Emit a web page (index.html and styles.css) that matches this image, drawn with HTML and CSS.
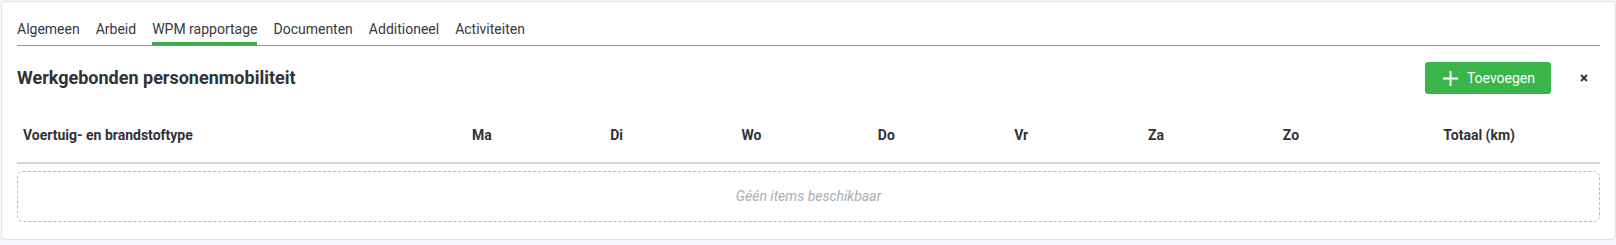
FILE: index.html
```html
<!DOCTYPE html>
<html lang="nl">
<head>
  <meta charset="UTF-8">
  <title>WPM rapportage</title>
  <link rel="stylesheet" href="styles.css">
</head>
<body>
  <div class="card">
    <!-- Tabbladen -->
    <nav class="tabs">
      <a class="tab">Algemeen</a>
      <a class="tab">Arbeid</a>
      <a class="tab active">WPM rapportage</a>
      <a class="tab">Documenten</a>
      <a class="tab">Additioneel</a>
      <a class="tab">Activiteiten</a>
    </nav>

    <div class="section-head">
      <h2>Werkgebonden personenmobiliteit</h2>
      <div class="actions">
        <button class="btn-add">
          <svg width="15" height="15" viewBox="0 0 15 15"><path d="M7.5 0v15M0 7.5h15" stroke="#fff" stroke-width="2"/></svg>
          Toevoegen
        </button>
        <button class="btn-close" title="Sluiten">
          <svg width="8" height="8" viewBox="0 0 8 8"><path d="M1 1l6 6M7 1l-6 6" stroke="#2f3338" stroke-width="1.8"/></svg>
        </button>
      </div>
    </div>

    <table class="wpm-table">
      <colgroup>
        <col class="col-type">
        <col class="col-day"><col class="col-day"><col class="col-day"><col class="col-day">
        <col class="col-day"><col class="col-day"><col class="col-day">
        <col class="col-total">
      </colgroup>
      <thead>
        <tr>
          <th class="first">Voertuig- en brandstoftype</th>
          <th>Ma</th>
          <th>Di</th>
          <th>Wo</th>
          <th>Do</th>
          <th>Vr</th>
          <th>Za</th>
          <th>Zo</th>
          <th>Totaal (km)</th>
        </tr>
      </thead>
    </table>

    <div class="empty">Géén items beschikbaar</div>
  </div>
</body>
</html>
```

FILE: styles.css
```css
body {
  margin: 0;
  padding: 1px 0 6px 1px;
  background-color: #f3f5f8;
  font-family: Roboto, "Liberation Sans", Arial, sans-serif;
  color: #2f3338;
}

.card {
  background: #fff;
  border: 1px solid #e1e4e8;
  border-radius: 4px;
  padding: 16px 15px 17px 15px;
}

/* Tabbladen */
.tabs {
  display: flex;
  gap: 16px;
  margin-top: 1px;
  border-bottom: 1px solid #8d949b;
}

.tab {
  font-size: 14px;
  line-height: 20px;
  padding-bottom: 3px;
  border-bottom: 3px solid transparent;
  color: #353a40;
  cursor: pointer;
}

.tab.active {
  border-bottom-color: #3aae4b;
}

/* Kop van de sectie */
.section-head {
  display: flex;
  align-items: center;
  justify-content: space-between;
  margin-top: 16px;
}

.section-head h2 {
  margin: 0;
  font-size: 18px;
  line-height: 24px;
  font-weight: 700;
  color: #2f3338;
}

.actions {
  display: flex;
  align-items: center;
  gap: 29px;
  margin-right: 12px;
}

.btn-add {
  display: flex;
  align-items: center;
  gap: 9px;
  height: 32px;
  padding: 0 16px 0 18px;
  border: none;
  border-radius: 3px;
  background-color: #39b54a;
  color: #fff;
  font-family: inherit;
  font-size: 14px;
  cursor: pointer;
}

.btn-close {
  display: flex;
  padding: 0;
  border: none;
  background: none;
  cursor: pointer;
}

/* Tabel */
.wpm-table {
  width: 100%;
  margin-top: 14px;
  border-collapse: collapse;
  table-layout: fixed;
}

.col-type { width: 25.1%; }
.col-day { width: 8.52%; }
.col-total { width: 15.26%; }

.wpm-table th {
  padding: 17px 5px;
  font-size: 14px;
  line-height: 20px;
  font-weight: 700;
  text-align: center;
  color: #2f3338;
  border-bottom: 2px solid #d5d9de;
}

.wpm-table th.first {
  text-align: left;
  padding-left: 6px;
}

.empty {
  margin-top: 7px;
  padding: 14px 15px 15px;
  border: 1px dashed #b7bbc1;
  border-radius: 6px;
  font-size: 14px;
  line-height: 20px;
  font-style: italic;
  text-align: center;
  color: #a9aeb5;
}
```
